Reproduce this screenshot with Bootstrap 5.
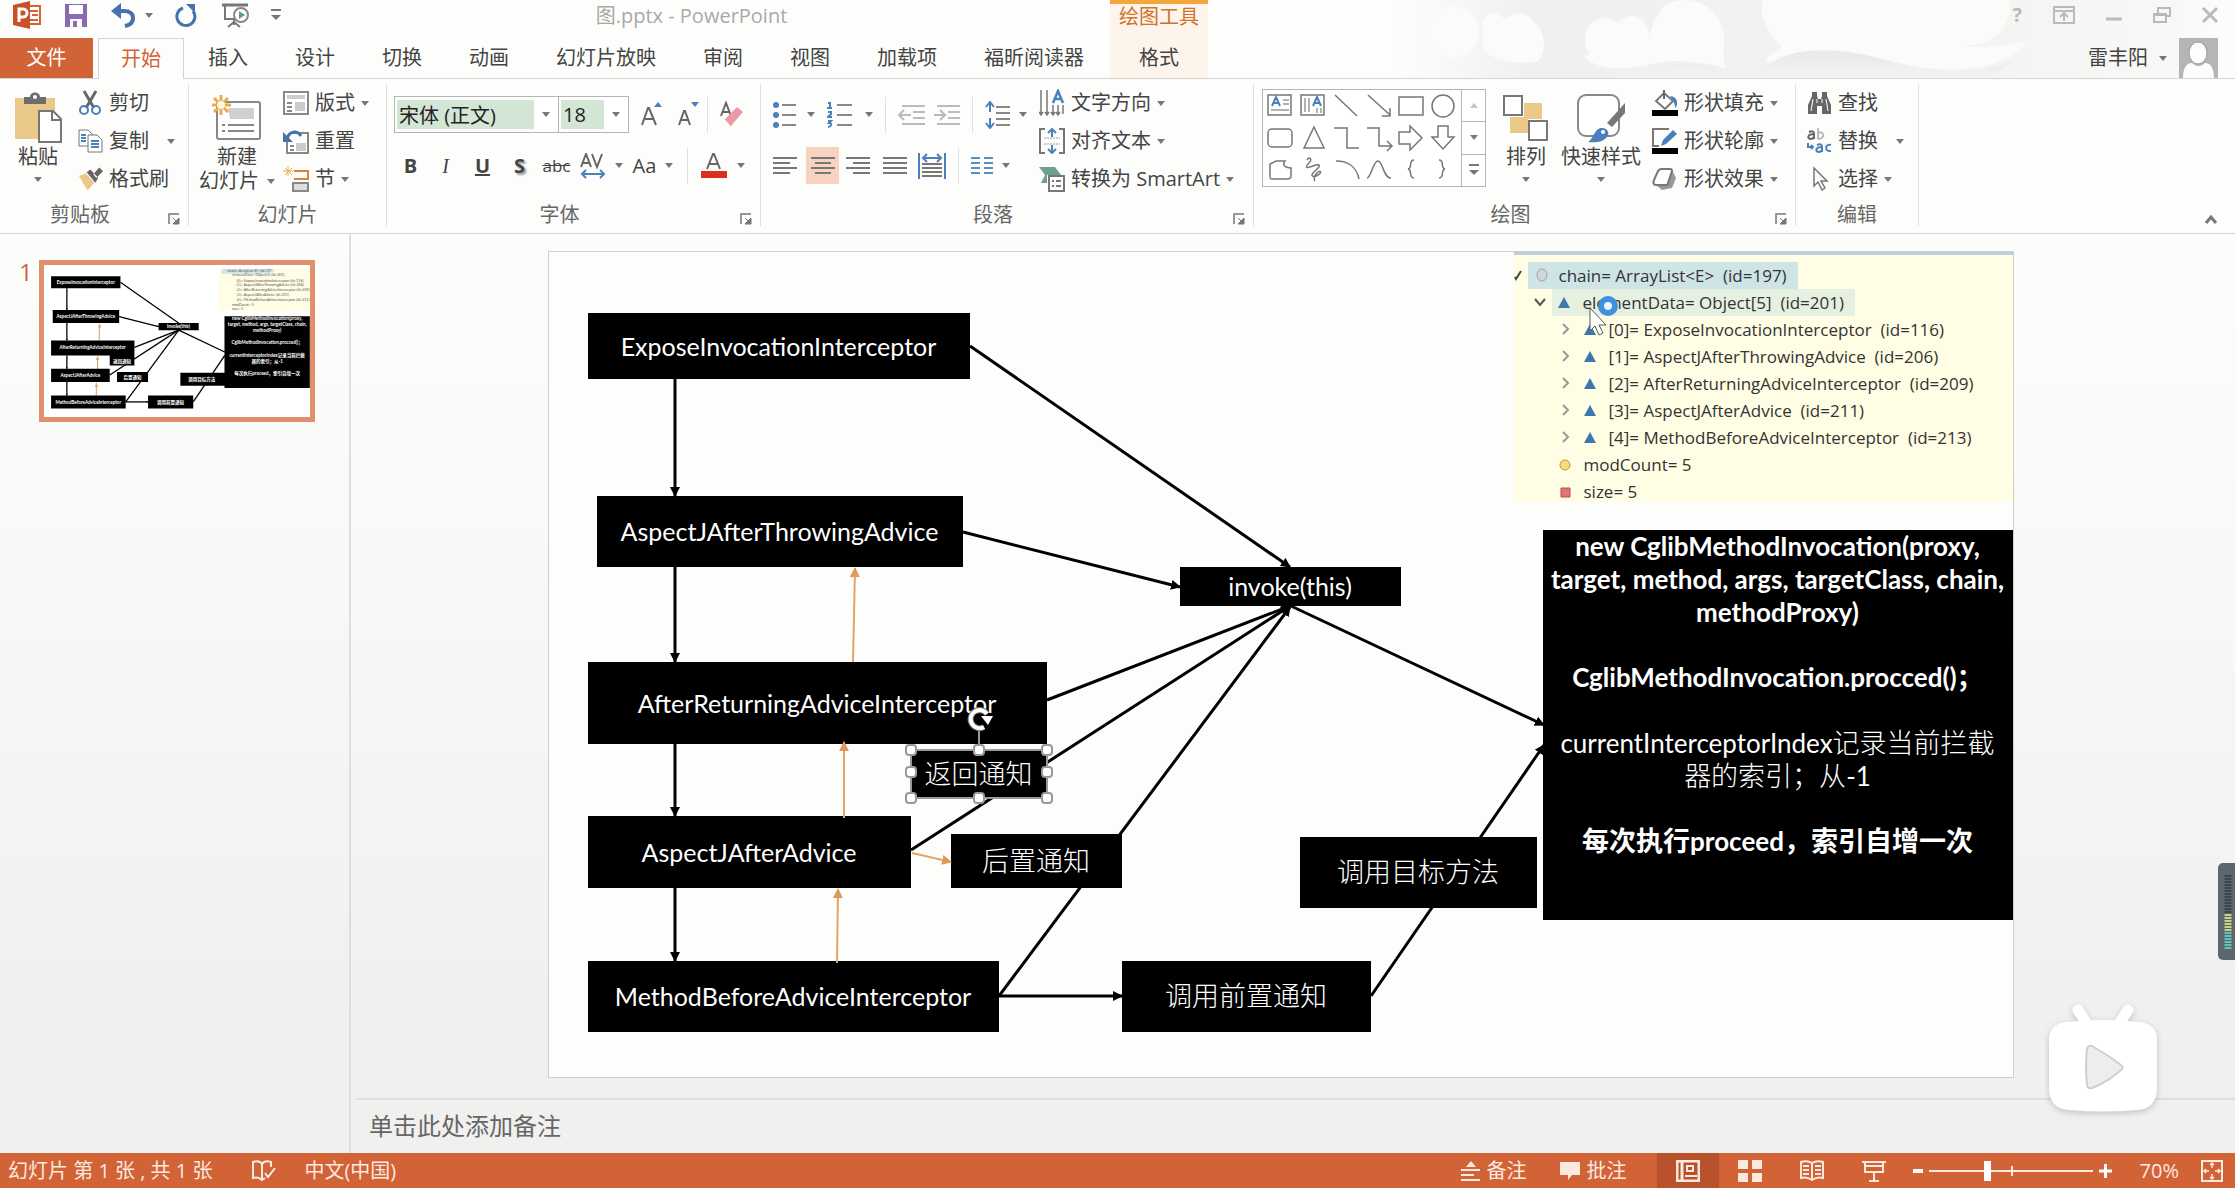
<!DOCTYPE html>
<html lang="zh-CN">
<head>
<meta charset="utf-8">
<meta name="viewport" content="width=device-width, initial-scale=1">
<title>图.pptx - PowerPoint</title>
<link href="https://cdn.jsdelivr.net/npm/bootstrap@5.3.0/dist/css/bootstrap.min.css" rel="stylesheet">
<style>
:root{--ink:#444;--line:#d3d5d4;--paper:#fdfefc;--brand:#d26336;--blue:#4a80bd}
body{font-family:"Open Sans","Noto Sans CJK SC",sans-serif;font-size:20px;line-height:24px;color:var(--ink);background:var(--paper);min-height:100vh;padding-right:3px;overflow:hidden}
button{border:0;background:none;padding:0;color:inherit;white-space:nowrap;line-height:24px}
svg{display:block;flex:none}
.tri{width:0;height:0;flex:none;border:4px solid transparent;border-top:5px solid #777;border-bottom:0}
/* header */
.top-grid{display:grid;grid-template-columns:1110px 98px 1fr;grid-template-rows:38px 40px;border-bottom:1px solid var(--line)}
.quick{height:30px}
.doc-title{color:#a9a9a9}
.tabs{grid-column:1;grid-row:2;column-gap:1px}
.tab{padding:0 23px;height:40px;color:var(--ink);text-decoration:none;display:flex;align-items:center;white-space:nowrap}
.tab-file{background:var(--brand);color:#fff;width:93px;justify-content:center;padding:0;margin-right:4px}
.tab-on{color:var(--brand);border:1px solid var(--line);border-bottom:0;background:var(--paper);padding:0 22px;height:41px;margin-bottom:-1px}
.ctx{grid-column:2;grid-row:1/3;background:#fdf5ec;border-top:4px solid #f3a63c}
.ctx-name{color:#d0722a;height:34px;padding-top:1px;text-align:center}
.ctx .tab{justify-content:center;padding:0}
.art{right:0;top:0;width:838px;height:78px}
.winbtns{grid-column:3;grid-row:1;color:#b9bab9;height:30px;padding-right:16px;gap:31px}
.user{grid-column:3;grid-row:2;padding-right:17px;gap:12px}
.user button{gap:11px}
/* ribbon */
.ribbon{height:155px;border-bottom:1px solid var(--line);padding:5px 0 7px;background:var(--paper)}
.grp{display:flex;flex-direction:column;border-right:1px solid #dfe1e0;height:142px;flex:none}
.grp-body{height:114px;display:flex}
.grp-name{color:#666;height:28px;display:flex;align-items:center;text-align:center}
.grp-name span{flex:1;padding-top:6px}
.grp-name button{width:28px;height:26px;display:flex;justify-content:center;align-items:end}
.g-clip{width:189px;padding-left:10px}.g-clip .grp-name{margin-left:-10px}
.g-slide{width:198px;padding-left:10px}.g-slide .grp-name{margin-left:-10px}
.g-font{width:374px;padding-left:7px}.g-font .grp-name{margin-left:-7px}
.g-para{width:493px;padding-left:12px}.g-para .grp-name{margin-left:-12px}
.g-draw{width:542px;padding-left:8px}.g-draw .grp-name{margin-left:-8px}
.g-edit{width:123px;padding-left:11px}.g-edit .grp-name{margin-left:-11px}
.col3{display:flex;flex-direction:column}
.col3 button{height:38px;display:flex;align-items:center;gap:6px}
.big{display:flex;flex-direction:column;align-items:center;padding-top:6px}
.big .pic{height:55px;display:flex;align-items:center}
.big .tri{margin-top:8px}
.two{padding-top:12px;display:flex;flex-direction:column;gap:14px}
.tool-row{display:flex;align-items:center;height:37px}
.tool-row button{height:37px;display:flex;align-items:center;justify-content:center;gap:9px}
.w33{width:33px}.w37{width:37px}.w52{width:52px}.w56{width:56px}.w76{width:76px}.w86{width:86px}
.g4{margin-left:4px}.g8{margin-left:8px}.g12{margin-left:12px}.g22{margin-left:22px}.g32{margin-left:32px}
.vr1{width:1px;height:36px;background:#dfe1e0}
.combo{display:flex;border:1px solid #b4b6b5;height:37px;align-items:center;background:#fff;padding:3px 0 3px 2px}
.combo input{border:0;background:#d3e6d6;height:29px;color:#222;padding:0 2px;outline:0;min-width:0}
.combo button{flex:1;height:29px}
.combo-name{width:165px}.combo-name input{width:137px}
.combo-size{width:71px;margin-left:-1px}.combo-size input{width:43px}
.center-on{background:#f9d3c1}
.gallery{border:1px solid #b4b6b5;width:224px;height:98px;margin-top:5px;background:#fff}
.gallery-side{width:24px;border-left:1px solid #b4b6b5}
.gallery-side button{flex:1;display:flex;align-items:center;justify-content:center}
.gallery-side button+button{border-top:1px solid #b4b6b5}
.fold{padding:0 17px 1px}
/* workspace */
.work{flex:1;background:linear-gradient(#fdfefc 0,#f9f9f8 32%,#f4f4f3 62%,#f0f0ef 85%)}
.pane{width:351px;border-right:2px solid #dcdfdf;padding:26px 0 0 19px;gap:6px}
.pane-no{color:#c8654a;font-size:24px}
.thumb{border:5px solid #e28f6d;background:#fff;width:276px;height:162px}
.thumb text{font-family:Lato,"Noto Sans CJK SC",sans-serif;font-size:25px;font-weight:700;fill:#fff;text-anchor:middle}
.thumb .dim text{fill:#555;font-size:20px;font-weight:400;text-anchor:start}
.stage{flex:1;display:flex;align-items:center;justify-content:center;padding:0 25px 4px 0}
.slide{position:relative;width:1466px;height:827px;border:1px solid #cbcfcd;background:var(--paper);flex:none}
.slide>svg,.slide>div{position:absolute}
.node{background:#000;color:#fff;display:flex;align-items:center;justify-content:center;font-family:Lato,"Noto Sans CJK SC",sans-serif;font-size:25px;white-space:nowrap}
.cjk{font-size:27px;font-weight:300}
.n1{left:39px;top:61px;width:382px;height:66px}
.n2{left:48px;top:244px;width:366px;height:71px}
.n3{left:39px;top:410px;width:459px;height:82px}
.n4{left:39px;top:564px;width:323px;height:72px}
.n5{left:39px;top:709px;width:411px;height:71px}
.n6{left:631px;top:315px;width:221px;height:39px}
.n7{left:362px;top:498px;width:136px;height:48px}
.n8{left:402px;top:582px;width:171px;height:54px}
.n9{left:573px;top:709px;width:249px;height:71px}
.n10{left:751px;top:585px;width:237px;height:71px}
.n11{left:994px;top:278px;width:470px;height:390px;flex-direction:column;justify-content:end;line-height:33px;text-align:center;font-weight:700;font-size:26px;padding-bottom:63px}
.n11 div{height:33px}
.n11 .cjk{font-weight:inherit}
.thin{font-weight:400}.n11 .thin .cjk{font-weight:300}
.over{left:0;top:0;z-index:3;pointer-events:none}
.tree{left:965px;top:0;width:499px;height:250px;background:#fffde4;border-top:3px solid #c0cddc;font-family:"Open Sans",sans-serif;font-size:17px;line-height:27px;color:#333;padding-top:7px}
.tree-row{display:flex;align-items:center;height:27px;white-space:pre;gap:6px}
.sel{background:#cfe4e6;padding:0 11px 0 8px;display:flex;align-items:center;height:27px;gap:11px}
.sel2{background:#e6f0e0;padding:0 11px 0 6px;display:flex;align-items:center;height:27px;gap:12px}
.t2{padding-left:20px}.t3{padding-left:46px;gap:12px}.t4{padding-left:45px;gap:12px}
.notes{border-top:2px solid #dcdfdf;height:55px;margin-left:5px}
.notes input{border:0;background:none;font-size:24px;width:100%;height:50px;padding:0 13px;outline:0}
.notes input::placeholder{color:#666;opacity:1}
/* status */
.status{background:var(--brand);color:#fbe9e0;height:35px;padding:0 12px 0 8px;white-space:nowrap}
.status button{display:flex;align-items:center;gap:7px;height:35px;justify-content:center}
.spell{margin:0 28px 0 40px}
.remark{margin:0 30px 0 33px}
.percent{margin:0 22px 0 28px}
.view{width:62px}
.view.on{background:#b9522a}
.zoom{appearance:none;width:164px;height:20px;margin:0 6px;background:linear-gradient(#fbe9e0,#fbe9e0) 50% 50%/100% 2px no-repeat,linear-gradient(#fbe9e0,#fbe9e0) 51% 50%/2px 10px no-repeat}
.zoom::-webkit-slider-thumb{appearance:none;width:7px;height:20px;background:#fff}
.meter{right:3px;top:863px;z-index:5}
.tv{right:76px;top:1002px;z-index:5}
.tv g{filter:drop-shadow(0 2px 3px #9998)}
</style>
<script src="https://cdn.jsdelivr.net/npm/bootstrap@5.3.0/dist/js/bootstrap.bundle.min.js"></script>
</head>
<body class="d-flex flex-column vh-100">

<header class="top-grid position-relative">
  <div class="d-flex align-items-start">
    <div class="quick d-flex align-items-center">
      <svg class="ms-2" width="34" height="30" viewBox="0 0 34 30"><path d="M20 6h12v18H20z" fill="#fff" stroke="#d26336" stroke-width="2"/><path d="M22 11h8M22 20h8M24 15h6" stroke="#d26336" stroke-width="2"/><path d="M5 5l17-4v28L5 25z" fill="#c9512a"/><path d="M11 22V9h4a3.600 3.600 0 010 8h-4" fill="none" stroke="#fff" stroke-width="3"/></svg>
      <button class="g22" aria-label="保存"><svg width="24" height="26" viewBox="0 0 24 26"><path d="M1 2h22v23H1z" fill="#8a6bb0"/><path d="M5 3h14v9H5zM6 17h12v8H6z" fill="#fff"/><path d="M9 19h4v6H9z" fill="#8a6bb0"/></svg></button>
      <button class="d-flex align-items-center gap-2 g22" aria-label="撤销"><svg width="27" height="26" viewBox="0 0 27 26"><path d="M5 9h9c6 0 9 3 9 7s-3 7-8 8" fill="none" stroke="#4472ad" stroke-width="4"/><path d="M1 9l10-8v16z" fill="#4472ad"/></svg><i class="tri"></i></button>
      <button class="g22" aria-label="重复"><svg width="24" height="26" viewBox="0 0 24 26"><path d="M8 6a9 9 0 1010 3" fill="none" stroke="#4472ad" stroke-width="3"/><path d="M11 2h9v9z" fill="#4472ad"/></svg></button>
      <button class="g22" aria-label="从头开始"><svg width="28" height="28" viewBox="0 0 28 28" fill="none"><path d="M1 4h26" stroke="#777" stroke-width="3"/><path d="M4 5v13h9M13 18v6M7 26l6-5 6 5" stroke="#777" stroke-width="2"/><circle cx="20" cy="14" r="7" fill="#fff" stroke="#888" stroke-width="2"/><path d="M18 10v8l6-4z" fill="#5a9d80"/></svg></button>
      <button class="g22" aria-label="自定义快速访问工具栏"><svg width="10" height="12" viewBox="0 0 10 12"><path d="M0 1h10" stroke="#777" stroke-width="2"/><path d="M0 6h10l-5 5z" fill="#777"/></svg></button>
    </div>
    <div class="doc-title flex-fill text-center pt-1 pe-2">图.pptx - PowerPoint</div>
  </div>
  <div class="ctx"><div class="ctx-name">绘图工具</div><a class="tab" href="#">格式</a></div>
  <div class="winbtns d-flex justify-content-end align-items-center">
    <svg class="position-absolute art" viewBox="0 0 830 78" preserveAspectRatio="none"><defs><linearGradient id="fade"><stop offset="0" stop-color="#f0f0ee" stop-opacity="0"/><stop offset=".16" stop-color="#f0f0ee"/><stop offset=".65" stop-color="#f3f3f1"/><stop offset=".93" stop-color="#f8f8f6"/><stop offset="1" stop-color="#f8f8f6" stop-opacity="0"/></linearGradient><linearGradient id="swell" x2="0" y2="1"><stop offset="0" stop-color="#e9e9e7"/><stop offset="1" stop-color="#f3f3f1"/></linearGradient></defs><path d="M0 0h830v78H0z" fill="url(#fade)"/><g fill="#fbfcfa"><ellipse cx="56" cy="32" rx="25" ry="26"/><path d="M85 20c10-12 18-5 22 0 12-12 24-6 28 2 12 8 14 30 4 40-22 2-40 0-54-12z"/><ellipse cx="206" cy="40" rx="20" ry="22"/><ellipse cx="232" cy="38" rx="18" ry="22"/><path d="M250 40C254 10 268 0 285 0c30 0 44 30 38 48l2 20c-40-10-60-8-80-2-26 4-46 4-60-10z"/><path d="M362 0h245c2 30-16 44-50 47 40 2 58-6 66-4-20 26-70 30-104 24-60-10-100-26-150-4l-4-4 16-12c-18-20-22-32-19-47z"/></g><path d="M365 66c30-22 80-20 140 0 40 8 80 6 105-6-10 12-20 18-30 18H210c20-2 50-18 90-14 20 2 40 12 65 2z" fill="url(#swell)"/></svg>
    <b class="position-relative">?</b>
    <svg class="position-relative" width="22" height="18" viewBox="0 0 22 18" fill="none" stroke="#b9bab9" stroke-width="2"><path d="M1 1h20v16H1zM1 5h20M11 15V8M7 11l4-4 4 4"/></svg>
    <svg class="position-relative" width="16" height="18" viewBox="0 0 16 18"><path d="M0 13h16" stroke="#b9bab9" stroke-width="3"/></svg>
    <svg class="position-relative" width="18" height="18" viewBox="0 0 18 18" fill="none" stroke="#b9bab9" stroke-width="2"><path d="M1 8h12v8H1zM1 9h12M5 7V2h12v8h-4"/></svg>
    <svg class="position-relative" width="17" height="18" viewBox="0 0 17 18" stroke="#b9bab9" stroke-width="3"><path d="M1 2l14 14M15 2L1 16"/></svg>
  </div>
  <nav class="tabs d-flex">
    <a class="tab tab-file" href="#">文件</a><a class="tab tab-on" href="#">开始</a><a class="tab" href="#">插入</a><a class="tab" href="#">设计</a><a class="tab" href="#">切换</a><a class="tab" href="#">动画</a><a class="tab" href="#">幻灯片放映</a><a class="tab" href="#">审阅</a><a class="tab" href="#">视图</a><a class="tab" href="#">加载项</a><a class="tab" href="#">福昕阅读器</a>
  </nav>
  <div class="user d-flex justify-content-end align-items-center position-relative">
    <button class="d-flex align-items-center">雷丰阳<i class="tri"></i></button>
    <svg width="39" height="40" viewBox="0 0 39 40"><path d="M0 0h39v40H0z" fill="#b3b6b4"/><ellipse cx="19" cy="15" rx="9" ry="11" fill="#fdfefc" stroke="#999c9a"/><path d="M4 40c0-11 4-15 9-15 4 4 9 4 13 0 5 0 9 4 9 15z" fill="#fdfefc"/></svg>
  </div>
</header>

<svg width="0" height="0" class="position-absolute"><defs>
  <symbol id="launch" viewBox="0 0 12 12"><path d="M1 11V1h10" fill="none" stroke="#777" stroke-width="1.500"/><path d="M5 5l4 4M11 5v6H5z" stroke="#777" fill="#777"/></symbol>
</defs></svg>

<section class="ribbon d-flex">
  <div class="grp g-clip">
    <div class="grp-body">
      <button class="big w56"><span class="pic"><svg width="48" height="52" viewBox="0 0 48 52"><path d="M1 6h40v41H1z" fill="#ebc988"/><path d="M10 5h6c0-6 10-6 10 0h6v7H10z" fill="#6d6d6d"/><circle cx="21" cy="5" r="2" fill="#fff"/><path d="M25 19h14l8 8v23H25z" fill="#fff" stroke="#777" stroke-width="2"/><path d="M38 19v9h9" fill="none" stroke="#777" stroke-width="2"/></svg></span><span>粘贴</span><i class="tri"></i></button>
      <div class="col3 g12">
        <button><svg width="25" height="26" viewBox="0 0 25 26" fill="none"><path d="M6 1l10 17M18 1L8 18" stroke="#666" stroke-width="3"/><circle cx="6" cy="20" r="4" stroke="#4a80bd" stroke-width="2"/><circle cx="18" cy="20" r="4" stroke="#4a80bd" stroke-width="2"/></svg>剪切</button>
        <button><svg width="25" height="24" viewBox="0 0 25 24" fill="#fff" stroke="#777"><path d="M1 1h9l4 4v12H1z"/><path d="M10 6h9l5 5v12H10z"/><path d="M3 6h5M3 9h5M3 12h5M13 12h8M13 15h8M13 18h8" stroke="#4a80bd" stroke-width="2"/></svg>复制<i class="tri g12"></i></button>
        <button><svg width="25" height="26" viewBox="0 0 26 26"><path d="M1 10l7-3 9 10-7 8z" fill="#ebc988"/><path d="M9 6l9 11 3-5-8-9zM16 8l6-7 4 4-7 7z" fill="#666"/></svg>格式刷</button>
      </div>
    </div>
    <div class="grp-name"><span>剪贴板</span><button aria-label="剪贴板选项"><svg width="12" height="12"><use href="#launch"/></svg></button></div>
  </div>

  <div class="grp g-slide">
    <div class="grp-body">
      <button class="big w76"><span class="pic"><svg width="50" height="46" viewBox="0 0 50 46"><rect x="5" y="7" width="43" height="37" rx="2" fill="#fff" stroke="#888" stroke-width="2"/><path d="M16 13h26v11H18z" fill="#cfcfcf"/><path d="M10 30h3M16 30h26M10 36h3M16 36h26" stroke="#888" stroke-width="2"/><g stroke="#e6ac4f" stroke-width="3"><path d="M9 0v20M0 10h19M2 3l14 14M16 3L2 17"/></g><circle cx="9" cy="10" r="4" fill="#fff6e0"/></svg></span><span>新建</span><span class="d-flex align-items-center gap-1">幻灯片<i class="tri m-0 ms-1"></i></span></button>
      <div class="col3 g8">
        <button><svg width="26" height="24" viewBox="0 0 26 24"><path d="M1 1h24v22H1z" fill="#fff" stroke="#888" stroke-width="2"/><path d="M4 4h18v4H4zM12 11h10v9H12z" fill="#ccc"/><path d="M4 12h5M4 16h5M4 20h5" stroke="#888" stroke-width="2"/></svg>版式<i class="tri"></i></button>
        <button><svg width="26" height="26" viewBox="0 0 26 26"><path d="M8 5h17v20H4V14" fill="#fff" stroke="#888" stroke-width="2"/><path d="M13 15h10v8H13z" fill="#ccc"/><path d="M7 18h4M7 22h4" stroke="#888" stroke-width="2"/><path d="M4 11c2-8 10-9 14-3" fill="none" stroke="#4472ad" stroke-width="3"/><path d="M0 4v10h10z" fill="#4472ad"/></svg>重置</button>
        <button><svg width="26" height="26" viewBox="0 0 26 26" fill="none"><path d="M11 5h14v8H11" stroke="#d5843a" stroke-width="2"/><path d="M10 17h15v8H10z" fill="#ddd" stroke="#888" stroke-width="2"/><path d="M5 0v10M0 5h10M2 2l7 7M9 2L2 9" stroke="#e6ac4f"/></svg>节<i class="tri"></i></button>
      </div>
    </div>
    <div class="grp-name"><span>幻灯片</span></div>
  </div>

  <div class="grp g-font">
    <div class="grp-body"><div class="two">
      <div class="tool-row">
        <div class="combo combo-name"><input aria-label="字体" value="宋体 (正文)"><button class="d-flex justify-content-center" aria-label="字体列表"><i class="tri"></i></button></div>
        <div class="combo combo-size"><input aria-label="字号" value="18"><button class="d-flex justify-content-center" aria-label="字号列表"><i class="tri"></i></button></div>
        <button class="w37 g4" aria-label="增大字号"><svg width="24" height="26" viewBox="0 0 24 26"><path d="M2 23L8 6h1l7 17M5 17h9" fill="none" stroke="#666" stroke-width="2"/><path d="M14 5h8l-4-5z" fill="#4a80bd"/></svg></button>
        <button class="w37" aria-label="减小字号"><svg width="24" height="26" viewBox="0 0 24 26"><path d="M2 23L7 9h1l5 14M4 18h8" fill="none" stroke="#666" stroke-width="2"/><path d="M14 0h8l-4 5z" fill="#4a80bd"/></svg></button>
        <i class="vr1"></i>
        <button class="g12" aria-label="清除格式"><svg width="24" height="28" viewBox="0 0 24 28"><path d="M1 15L6 2l5 13M3 11h6" fill="none" stroke="#666" stroke-width="2"/><path d="M4 19L17 6l6 5-13 15z" fill="#e89aa6"/><path d="M4 19l6 7" stroke="#fff" stroke-width="2"/></svg></button>
      </div>
      <div class="tool-row">
        <button class="w33"><b>B</b></button><button class="w37" style="font-family:'Liberation Serif',serif"><em>I</em></button><button class="w37"><u><b>U</b></u></button><button class="w37" style="text-shadow:2px 2px 2px #999"><b>S</b></button><button class="w37" style="font-size:17px"><s>abc</s></button>
        <button class="w52" aria-label="字符间距"><svg width="26" height="26" viewBox="0 0 26 26" fill="none"><path d="M1 14L6 1l5 13M3 10h6M12 1l5 13 5-13" stroke="#666" stroke-width="2"/><path d="M2 21h22M6 17l-4 4 4 4M20 17l4 4-4 4" stroke="#4a80bd" stroke-width="2"/></svg><i class="tri"></i></button>
        <button class="w52">Aa<i class="tri"></i></button><i class="vr1 ms-2 me-2"></i>
        <button class="w52" aria-label="字体颜色"><svg width="28" height="26" viewBox="0 0 28 26"><path d="M7 16L13 1h1l6 15M9 11h9" fill="none" stroke="#666" stroke-width="2"/><path d="M1 18h26v7H1z" fill="#dc2e1e"/></svg><i class="tri"></i></button>
      </div>
    </div></div>
    <div class="grp-name"><span>字体</span><button aria-label="字体选项"><svg width="12" height="12"><use href="#launch"/></svg></button></div>
  </div>

  <div class="grp g-para">
    <div class="grp-body"><div class="two" style="width:266px">
      <div class="tool-row">
        <button aria-label="项目符号"><svg width="25" height="26" viewBox="0 0 25 26"><path d="M9 3h14M9 13h14M9 23h14" stroke="#888" stroke-width="2"/><g fill="#4a80bd"><circle cx="3" cy="3" r="3"/><circle cx="3" cy="13" r="3"/><circle cx="3" cy="23" r="3"/></g></svg><i class="tri"></i></button>
        <button class="g12" aria-label="编号"><svg width="25" height="26" viewBox="0 0 25 26" fill="none"><path d="M10 3h15M10 13h15M10 23h15" stroke="#888" stroke-width="2"/><path d="M1 1h2v5M0 6h5M1 10h3v2l-3 3h4M1 19h3l-2 2c4 0 2 4-1 4" stroke="#4a80bd" stroke-width="2"/></svg><i class="tri g4"></i></button>
        <i class="vr1 g12"></i>
        <button class="g12" aria-label="减少缩进量"><svg width="27" height="20" viewBox="0 0 27 20" fill="none" stroke="#bbb" stroke-width="2"><path d="M4 1h23M15 7h12M15 13h12M4 19h23M1 10h12M6 5l-5 5 5 5"/></svg></button>
        <button class="g8" aria-label="增加缩进量"><svg width="27" height="20" viewBox="0 0 27 20" fill="none" stroke="#bbb" stroke-width="2"><path d="M4 1h23M15 7h12M15 13h12M4 19h23M1 10h12M7 5l5 5-5 5"/></svg></button>
        <i class="vr1 g12"></i>
        <button class="g12" aria-label="行距"><svg width="25" height="28" viewBox="0 0 25 28" fill="none"><path d="M11 6h14M11 12h14M11 18h14M11 24h14" stroke="#888" stroke-width="2"/><path d="M5 1v10M5 17v10M1 6l4-5 4 5M1 22l4 5 4-5" stroke="#4a80bd" stroke-width="2"/></svg><i class="tri"></i></button>
      </div>
      <div class="tool-row">
        <button class="w33 justify-content-start" aria-label="左对齐"><svg width="24" height="18" viewBox="0 0 24 18" stroke="#777" stroke-width="2"><path d="M0 1h24M0 6h17M0 11h24M0 16h17"/></svg></button>
        <button class="w33 center-on" aria-label="居中"><svg width="24" height="18" viewBox="0 0 24 18" stroke="#777" stroke-width="2"><path d="M0 1h24M4 6h16M0 11h24M4 16h16"/></svg></button>
        <button class="w37" aria-label="右对齐"><svg width="24" height="18" viewBox="0 0 24 18" stroke="#777" stroke-width="2"><path d="M0 1h24M7 6h17M0 11h24M7 16h17"/></svg></button>
        <button class="w37" aria-label="两端对齐"><svg width="24" height="18" viewBox="0 0 24 18" stroke="#777" stroke-width="2"><path d="M0 1h24M0 6h24M0 11h24M0 16h24"/></svg></button>
        <button class="w37" aria-label="分散对齐"><svg width="28" height="28" viewBox="0 0 28 28" fill="none" stroke-width="2"><path d="M4 12h20M4 16h20M4 20h20M4 24h20" stroke="#777"/><path d="M1 1v26M27 1v26M5 6h18M9 2L5 6l4 4M19 2l4 4-4 4" stroke="#4a80bd"/></svg></button>
        <i class="vr1 g8"></i>
        <button class="g12" aria-label="分栏"><svg width="22" height="18" viewBox="0 0 22 18" stroke="#5b8cc4" stroke-width="2"><path d="M0 1h9M13 1h9M0 6h9M13 6h9M0 11h9M13 11h9M0 16h9M13 16h9"/></svg><i class="tri"></i></button>
      </div></div>
      <div class="col3">
        <button><svg width="26" height="28" viewBox="0 0 26 28" fill="none"><path d="M2 1v23M8 1v23M14 16v9M19 16v9M24 16v9M0 23l2 3 2-3M6 23l2 3 2-3M12 23l2 3 2-3M17 23l2 3 2-3" stroke="#777" stroke-width="1.500"/><path d="M14 14l5-12 5 12M16 10h6" stroke="#4a80bd" stroke-width="2.500"/></svg>文字方向<i class="tri"></i></button>
        <button><svg width="26" height="26" viewBox="0 0 26 26" fill="none"><path d="M6 1H1v24h5M20 1h5v24h-5" stroke="#777" stroke-width="2"/><path d="M5 10h16M5 16h16" stroke="#999" stroke-dasharray="2 1"/><path d="M13 1v8M13 17v8M9 5l4-4 4 4M9 21l4 4 4-4" stroke="#4a80bd" stroke-width="2"/></svg>对齐文本<i class="tri"></i></button>
        <button><svg width="26" height="28" viewBox="0 0 26 28"><path d="M0 2h16l6 8H8v8H2l4-8z" fill="#6fa08f"/><path d="M10 11h15v15H10z" fill="#fff" stroke="#777" stroke-width="2"/><path d="M13 16h2M17 16h5M13 21h2M17 21h5" stroke="#777" stroke-width="2"/></svg>转换为 SmartArt<i class="tri"></i></button>
      </div>
    </div>
    <div class="grp-name"><span>段落</span><button aria-label="段落选项"><svg width="12" height="12"><use href="#launch"/></svg></button></div>
  </div>

  <div class="grp g-draw">
    <div class="grp-body">
      <div class="gallery d-flex">
        <svg class="me-auto" width="198" height="96" viewBox="0 0 198 96" fill="none" stroke="#777" stroke-width="1.500">
          <path d="M5 5h23v20H5zM38 5h23v20H38z"/><path d="M20 10h6M20 14h6M8 20h18M42 8v14M46 8v14M58 18v5M54 18v5" stroke="#999"/><path d="M9 16l4-9 4 9M10 13h6M50 16l4-9 4 9M51 13h6" stroke="#4a80bd" stroke-width="2"/>
          <path d="M72 5l22 21M105 5l22 20M127 18v8h-8M136 7h24v18h-24z"/><circle cx="180" cy="16" r="11"/>
          <rect x="5" y="39" width="24" height="18" rx="4"/><path d="M51 37l10 21H41zM71 38h13v20h12M104 38h12v18h12M124 51l5 5-5 5M136 42h11v-6l12 12-12 12v-6h-11zM175 36h10v11h6l-11 12-11-12h6z"/>
          <path d="M7 74l6-3h9c-4 5 2 7 6 7v8c0 2-2 3-4 3H9c-2 0-2-1-2-3zM44 70c2-4 6-1 2 3s-4 6 4 3 8 0 2 5-2 7 3 4 2-6-2-1 0 6-2 7M73 71c14 0 21 8 23 18M104 88c4 0 6-17 11-17s5 17 13 17M151 70c-6 0-1 8-6 9 5 1 0 9 6 9M176 70c6 0 1 8 6 9-5 1 0 9-6 9"/>
        </svg>
        <div class="gallery-side d-flex flex-column"><button aria-label="上一行"><svg width="8" height="5"><path d="M0 5h8L4 0z" fill="#c5c5c5"/></svg></button><button aria-label="下一行"><i class="tri"></i></button><button aria-label="其他形状"><svg width="10" height="12" viewBox="0 0 10 12"><path d="M0 1h10" stroke="#777" stroke-width="2"/><path d="M0 6h10l-5 5z" fill="#777"/></svg></button></div>
      </div>
      <button class="big w56 g12"><span class="pic"><svg width="46" height="46" viewBox="0 0 46 46"><path d="M21 8h18v16H21zM7 22h18v16H7z" fill="#ebc988"/><path d="M1 1h18v19H1zM26 26h18v19H26z" fill="#fff" stroke="#777" stroke-width="2"/></svg></span><span>排列</span><i class="tri"></i></button>
      <button class="big w86 g4"><span class="pic"><svg width="50" height="50" viewBox="0 0 50 50"><rect x="2" y="2" width="41" height="41" rx="8" fill="#fff" stroke="#888" stroke-width="2"/><path d="M49 10v10L36 34l-5-4z" fill="#777"/><path d="M12 49c6-3 6-14 14-14 6 0 8 6 5 9-4 5-12 6-19 5z" fill="#4a80bd"/><circle cx="27" cy="39" r="2" fill="#fff"/></svg></span><span>快速样式</span><i class="tri"></i></button>
      <div class="col3 g8">
        <button><svg width="26" height="28" viewBox="0 0 26 28"><path d="M4 12l8-8 9 8-8 8z" fill="#fff" stroke="#777" stroke-width="2"/><path d="M12 10V1" stroke="#666" stroke-width="2"/><path d="M18 7c8 1 8 7 6 12-2-2-1-5-3-7z" fill="#4a80bd"/><path d="M0 21h26v6H0z" fill="#000"/></svg>形状填充<i class="tri"></i></button>
        <button><svg width="26" height="28" viewBox="0 0 26 28"><path d="M17 2H1v17h6" fill="none" stroke="#777" stroke-width="2"/><path d="M9 19l2-6L21 3l4 4-11 10z" fill="#4a80bd"/><path d="M0 21h26v6H0z" fill="#000"/></svg>形状轮廓<i class="tri"></i></button>
        <button><svg width="26" height="24" viewBox="0 0 26 24"><path d="M4 18l5-14 11-1 4 8-4 10-10 2z" fill="#999"/><path d="M9 2h9c2 0 2 1 2 2l-4 12c0 1-1 2-2 2H4c-3 0-3-3-2-5l4-9c1-1 2-2 3-2z" fill="#fff" stroke="#777" stroke-width="2"/></svg>形状效果<i class="tri"></i></button>
      </div>
    </div>
    <div class="grp-name"><span>绘图</span><button aria-label="形状格式选项"><svg width="12" height="12"><use href="#launch"/></svg></button></div>
  </div>

  <div class="grp g-edit">
    <div class="grp-body"><div class="col3">
      <button><svg width="25" height="24" viewBox="0 0 25 24" fill="#666"><path d="M5 1h5v4l1 3h3l1-3V1h5v4l4 9v9h-9v-8h-5v8H1v-9l4-9z"/><path d="M6 8L4 20M19 8l2 12M10 8v4M15 8v4" stroke="#fff" stroke-width="1"/></svg>查找</button>
      <button><svg width="25" height="26" viewBox="0 0 25 26" fill="none" stroke-width="2"><path d="M2 4c4-2 5 0 5 2v5M7 6c-7 0-7 5-3 5 2 0 3-2 3-2" stroke="#666"/><path d="M11 0v11M11 5c6-3 8 6 0 6" stroke="#bbb"/><path d="M10 17c4-2 5 0 5 2v5M15 19c-7 0-7 5-3 5 2 0 3-2 3-2" stroke="#4a80bd"/><path d="M24 17c-6-2-7 7 0 6M1 15v4h5M4 17l2 2-2 2" stroke="#4a80bd"/></svg>替换<i class="tri g12"></i></button>
      <button><svg width="25" height="26" viewBox="0 0 25 26"><path d="M7 2v18l4-4 4 8 3-2-4-7h6z" fill="#fff" stroke="#777" stroke-width="1.500"/></svg>选择<i class="tri"></i></button>
    </div></div>
    <div class="grp-name"><span>编辑</span></div>
  </div>
  <button class="fold ms-auto align-self-end" aria-label="折叠功能区"><svg width="14" height="12" viewBox="0 0 14 12"><path d="M2 10l5-6 5 6" fill="none" stroke="#777" stroke-width="3"/></svg></button>
</section>

<main class="work d-flex">
  <aside class="pane d-flex align-items-start flex-shrink-0">
    <span class="pane-no">1</span>
    <div class="thumb">
      <svg width="266" height="152" viewBox="0 0 1465 826" preserveAspectRatio="none">
        <path d="M965 20h498v230H965z" fill="#fffde4"/><path d="M979 20h272v28H979z" fill="#cfe4e6"/>
        <g class="dim"><text x="1010" y="38">chain= ArrayList&lt;E&gt; (id=197)</text><text x="1035" y="62">elementData= Object[5] (id=201)</text><text x="1060" y="90">[0]= ExposeInvocationInterceptor (id=116)</text><text x="1060" y="116">[1]= AspectJAfterThrowingAdvice (id=206)</text><text x="1060" y="142">[2]= AfterReturningAdviceInterceptor (id=209)</text><text x="1060" y="170">[3]= AspectJAfterAdvice (id=211)</text><text x="1060" y="196">[4]= MethodBeforeAdviceInterceptor (id=213)</text><text x="1035" y="222">modCount= 5</text><text x="1035" y="246">size= 5</text></g>
        <use href="#links" stroke-width="7"/>
        <path d="M304 410l2-88M295 566v-68M288 711l1-66" stroke="#e3a468" stroke-width="6"/><path d="M306 316l9 24h-18zM295 492l9 24h-18zM289 637l9 24h-18z" fill="#e3a468"/>
        <path d="M39 61h382v66H39zM48 244h366v71H48zM39 410h459v82H39zM39 564h323v72H39zM39 709h411v71H39zM631 315h221v39H631zM362 492h136v54H362zM402 582h171v54H402zM573 709h249v71H573zM751 585h243v71H751zM994 278h470v390H994z"/>
        <text x="230" y="102">ExposeInvocationInterceptor</text><text x="230" y="288">AspectJAfterThrowingAdvice</text><text x="268" y="459">AfterReturningAdviceInterceptor</text><text x="200" y="608">AspectJAfterAdvice</text><text x="244" y="753">MethodBeforeAdviceInterceptor</text><text x="741" y="343">invoke(this)</text><text x="430" y="530">返回通知</text><text x="487" y="618">后置通知</text><text x="697" y="753">调用前置通知</text><text x="869" y="629">调用目标方法</text><text x="1229" y="300">new CglibMethodInvocation(proxy,</text><text x="1229" y="333">target, method, args, targetClass, chain,</text><text x="1229" y="366">methodProxy)</text><text x="1229" y="432">CglibMethodInvocation.procced()；</text><text x="1229" y="498">currentInterceptorIndex记录当前拦截</text><text x="1229" y="531">器的索引；从-1</text><text x="1229" y="597">每次执行proceed，索引自增一次</text>
      </svg>
    </div>
  </aside>

  <div class="flex-fill d-flex flex-column">
    <div class="stage">
      <div class="slide">
        <svg width="1464" height="825" viewBox="0 0 1464 825" stroke-width="3">
          <defs>
            <marker id="ak" viewBox="0 0 10 10" refX="9" refY="5" markerWidth="10" markerHeight="10" markerUnits="userSpaceOnUse" orient="auto"><path d="M0 0l10 5-10 5z" stroke="none"/></marker>
            <marker id="ao" viewBox="0 0 10 10" refX="9" refY="5" markerWidth="10" markerHeight="10" markerUnits="userSpaceOnUse" orient="auto"><path d="M0 0l10 5-10 5z" fill="#dd9a58" stroke="none"/></marker>
          </defs>
          <g id="links" stroke="#000" fill="none">
            <path d="M126 127v117" marker-end="url(#ak)"/><path d="M126 315v95" marker-end="url(#ak)"/><path d="M126 492v72" marker-end="url(#ak)"/><path d="M126 636v73" marker-end="url(#ak)"/>
            <path d="M421 94l320 221" marker-end="url(#ak)"/><path d="M414 280l217 55" marker-end="url(#ak)"/><path d="M498 448l243-94" marker-end="url(#ak)"/><path d="M362 598l379-244" marker-end="url(#ak)"/><path d="M450 744l291-389" marker-end="url(#ak)"/><path d="M742 354l253 119" marker-end="url(#ak)"/><path d="M822 744l173-251" marker-end="url(#ak)"/><path d="M450 744h123" marker-end="url(#ak)"/>
          </g>
        </svg>
        <div class="node n1">ExposeInvocationInterceptor</div>
        <div class="node n2">AspectJAfterThrowingAdvice</div>
        <div class="node n3">AfterReturningAdviceInterceptor</div>
        <div class="node n4">AspectJAfterAdvice</div>
        <div class="node n5">MethodBeforeAdviceInterceptor</div>
        <div class="node n6">invoke(this)</div>
        <div class="node cjk n7">返回通知</div>
        <div class="node cjk n8">后置通知</div>
        <div class="node cjk n9">调用前置通知</div>
        <div class="node cjk n10">调用目标方法</div>
        <div class="node n11"><div>new CglibMethodInvocation(proxy,</div><div>target, method, args, targetClass, chain,</div><div>methodProxy)</div><div></div><div>CglibMethodInvocation.procced()；</div><div></div><div class="thin">currentInterceptorIndex<span class="cjk">记录当前拦截</span></div><div class="thin"><span class="cjk">器的索引；从</span>-1</div><div></div><div><span class="cjk">每次执行</span>proceed<span class="cjk">，索引自增一次</span></div></div>
        <div class="tree">
          <div class="tree-row t1"><svg width="8" height="14" viewBox="0 0 8 14"><path d="M1 9l1 2 5-8" fill="none" stroke="#444" stroke-width="2"/></svg><span class="sel"><svg width="12" height="14" viewBox="0 0 12 14"><ellipse cx="6" cy="7" rx="5" ry="6" fill="#d3d6da" stroke="#9a9fa6"/></svg>chain= ArrayList&lt;E&gt;  (id=197)</span></div>
          <div class="tree-row t2"><svg width="12" height="12" viewBox="0 0 12 12"><path d="M1 3l5 6 5-6" fill="none" stroke="#555" stroke-width="2"/></svg><span class="sel2"><svg width="13" height="13" viewBox="0 0 13 13"><path d="M6 1l6 11H0z" fill="#3d78ad"/></svg>elementData= Object[5]  (id=201)</span></div>
          <div class="tree-row t3"><svg width="12" height="14" viewBox="0 0 12 14"><path d="M3 2l5 5-5 5" fill="none" stroke="#999" stroke-width="2"/></svg><svg width="13" height="13" viewBox="0 0 13 13"><path d="M6 1l6 11H0z" fill="#3d78ad"/></svg>[0]= ExposeInvocationInterceptor  (id=116)</div>
          <div class="tree-row t3"><svg width="12" height="14" viewBox="0 0 12 14"><path d="M3 2l5 5-5 5" fill="none" stroke="#999" stroke-width="2"/></svg><svg width="13" height="13" viewBox="0 0 13 13"><path d="M6 1l6 11H0z" fill="#3d78ad"/></svg>[1]= AspectJAfterThrowingAdvice  (id=206)</div>
          <div class="tree-row t3"><svg width="12" height="14" viewBox="0 0 12 14"><path d="M3 2l5 5-5 5" fill="none" stroke="#999" stroke-width="2"/></svg><svg width="13" height="13" viewBox="0 0 13 13"><path d="M6 1l6 11H0z" fill="#3d78ad"/></svg>[2]= AfterReturningAdviceInterceptor  (id=209)</div>
          <div class="tree-row t3"><svg width="12" height="14" viewBox="0 0 12 14"><path d="M3 2l5 5-5 5" fill="none" stroke="#999" stroke-width="2"/></svg><svg width="13" height="13" viewBox="0 0 13 13"><path d="M6 1l6 11H0z" fill="#3d78ad"/></svg>[3]= AspectJAfterAdvice  (id=211)</div>
          <div class="tree-row t3"><svg width="12" height="14" viewBox="0 0 12 14"><path d="M3 2l5 5-5 5" fill="none" stroke="#999" stroke-width="2"/></svg><svg width="13" height="13" viewBox="0 0 13 13"><path d="M6 1l6 11H0z" fill="#3d78ad"/></svg>[4]= MethodBeforeAdviceInterceptor  (id=213)</div>
          <div class="tree-row t4"><svg width="13" height="13" viewBox="0 0 13 13"><circle cx="6" cy="7" r="5" fill="#f7dc7c" stroke="#bf9440"/></svg>modCount= 5</div>
          <div class="tree-row t4"><svg width="13" height="13" viewBox="0 0 13 13"><path d="M2 3h9v9H2z" fill="#e07575" stroke="#c04a4a"/></svg>size= 5</div>
        </div>
        <svg class="over" width="1464" height="825" viewBox="0 0 1464 825">
          <g stroke="#e3a468" stroke-width="2" fill="none"><path d="M304 410l2-94" marker-end="url(#ao)"/><path d="M295 566v-76" marker-end="url(#ao)"/><path d="M288 711l1-74" marker-end="url(#ao)"/><path d="M363 601l39 9" marker-end="url(#ao)"/></g>
          <path d="M362 498h136v48H362zM430 498v-24" fill="none" stroke="#999" stroke-width="2"/>
          <path d="M435 475a9 9 0 113-13" fill="none" stroke="#777" stroke-width="6"/><path d="M435 475a9 9 0 113-13" fill="none" stroke="#fff" stroke-width="4"/><path d="M432 464h12l-5 9z" fill="#fff"/>
          <g fill="#fff" stroke="#999" stroke-width="2"><rect x="357" y="493" width="10" height="10" rx="3"/><rect x="425" y="493" width="10" height="10" rx="3"/><rect x="493" y="493" width="10" height="10" rx="3"/><rect x="357" y="515" width="10" height="10" rx="3"/><rect x="493" y="515" width="10" height="10" rx="3"/><rect x="357" y="541" width="10" height="10" rx="3"/><rect x="425" y="541" width="10" height="10" rx="3"/><rect x="493" y="541" width="10" height="10" rx="3"/></g>
          <circle cx="1059" cy="54" r="7" fill="#eaf6ff" stroke="#3f8fe0" stroke-width="6"/>
          <path d="M1041 56v23l5-5 4 9 4-2-4-8h7z" fill="#fff" stroke="#555"/>
        </svg>
      </div>
    </div>
    <div class="notes"><input aria-label="备注" placeholder="单击此处添加备注"></div>
  </div>
</main>

<footer class="status d-flex align-items-center">
  <span>幻灯片 第 1 张 , 共 1 张</span>
  <button class="spell" aria-label="拼写检查"><svg width="24" height="24" viewBox="0 0 24 24" fill="none" stroke="#fbe9e0" stroke-width="2"><path d="M10 20V5C8 2 4 2 1 3v16c4-1 7 0 9 2l3-2M10 5c2-3 6-3 9-2v5M13 14l3 4 7-9"/></svg></button>
  <span>中文(中国)</span>
  <div class="ms-auto d-flex align-items-center">
    <button><svg width="19" height="20" viewBox="0 0 19 20"><path d="M10 0l5 6H5z" fill="#fbe9e0"/><path d="M0 9h19M0 14h13M0 19h19" stroke="#fbe9e0" stroke-width="2"/></svg>备注</button>
    <button class="remark"><svg width="20" height="20" viewBox="0 0 20 20"><path d="M0 1h20v13h-8l-4 5v-5H0z" fill="#fbe9e0"/></svg>批注</button>
    <button class="view on" aria-label="普通视图"><svg width="24" height="22" viewBox="0 0 24 22" fill="none" stroke="#fbe9e0" stroke-width="3"><path d="M1 1h22v20H1zM6 1v20"/><path d="M11 6h6v5h-6zM9 16h12" stroke-width="2"/></svg></button>
    <button class="view" aria-label="幻灯片浏览"><svg width="24" height="22" viewBox="0 0 24 22" fill="#fbe9e0"><path d="M0 0h10v9H0zM14 0h10v9H14zM0 13h10v9H0zM14 13h10v9H14z"/></svg></button>
    <button class="view" aria-label="阅读视图"><svg width="24" height="22" viewBox="0 0 24 22" fill="none" stroke="#fbe9e0" stroke-width="2"><path d="M12 3C9 1 4 1 1 2v16c4-1 8 0 11 2 3-2 7-3 11-2V2c-3-1-8-1-11 1v17"/><path d="M3 6h6M3 10h6M3 14h6M15 6h6M15 10h6M15 14h6"/></svg></button>
    <button class="view" aria-label="幻灯片放映"><svg width="24" height="22" viewBox="0 0 24 22" fill="none" stroke="#fbe9e0" stroke-width="2"><path d="M0 2h24M3 6h18M3 3v9h18V3M12 12v8M7 21h10"/></svg></button>
    <button class="g8" aria-label="缩小"><svg width="10" height="4"><path d="M0 0h10v4H0z" fill="#fff"/></svg></button>
    <input class="zoom" type="range" min="10" max="190" value="73" aria-label="显示比例">
    <button aria-label="放大"><svg width="13" height="14" viewBox="0 0 13 14" stroke="#fff" stroke-width="3"><path d="M0 7h13M6.500 0v14"/></svg></button>
    <span class="percent">70%</span>
    <button aria-label="适应窗口"><svg width="22" height="22" viewBox="0 0 22 22" fill="none" stroke="#fbe9e0" stroke-width="2"><path d="M1 1h20v20H1z"/><path d="M11 3v5M11 14v5M3 11h5M14 11h5M9 5l2-2 2 2M9 17l2 2 2-2M5 9l-2 2 2 2M17 9l2 2-2 2" stroke-width="1.500"/></svg></button>
  </div>
</footer>

<svg class="position-absolute meter" width="17" height="98" viewBox="0 0 17 98"><path d="M17 0H5a5 5 0 00-5 5v87a5 5 0 005 5h12z" fill="#5b6670"/><path d="M10 12v40" stroke="#3b4652" stroke-width="7" stroke-dasharray="2 1"/><path d="M10 51v18" stroke="#c9d47a" stroke-width="7" stroke-dasharray="2 1"/><path d="M10 69v18" stroke="#62c3bd" stroke-width="7" stroke-dasharray="2 1"/></svg>
<svg class="position-absolute tv" width="118" height="118" viewBox="0 0 118 118"><g fill="#fff"><path d="M34 8l11 17M84 8L73 25" stroke="#fff" stroke-width="11" stroke-linecap="round"/><path d="M22 20q37-4 74 0 17 2 17 18v48q0 20-19 22-35 3-70 0Q5 106 5 86V38q0-16 17-18z"/></g><path d="M43 48q0-5 5-4 16 9 29 19 3 2 0 5-13 12-29 18-5 1-5-4-2-17 0-34z" fill="#ededed" stroke="#cfcfcf" stroke-width="2"/></svg>
</body>
</html>
